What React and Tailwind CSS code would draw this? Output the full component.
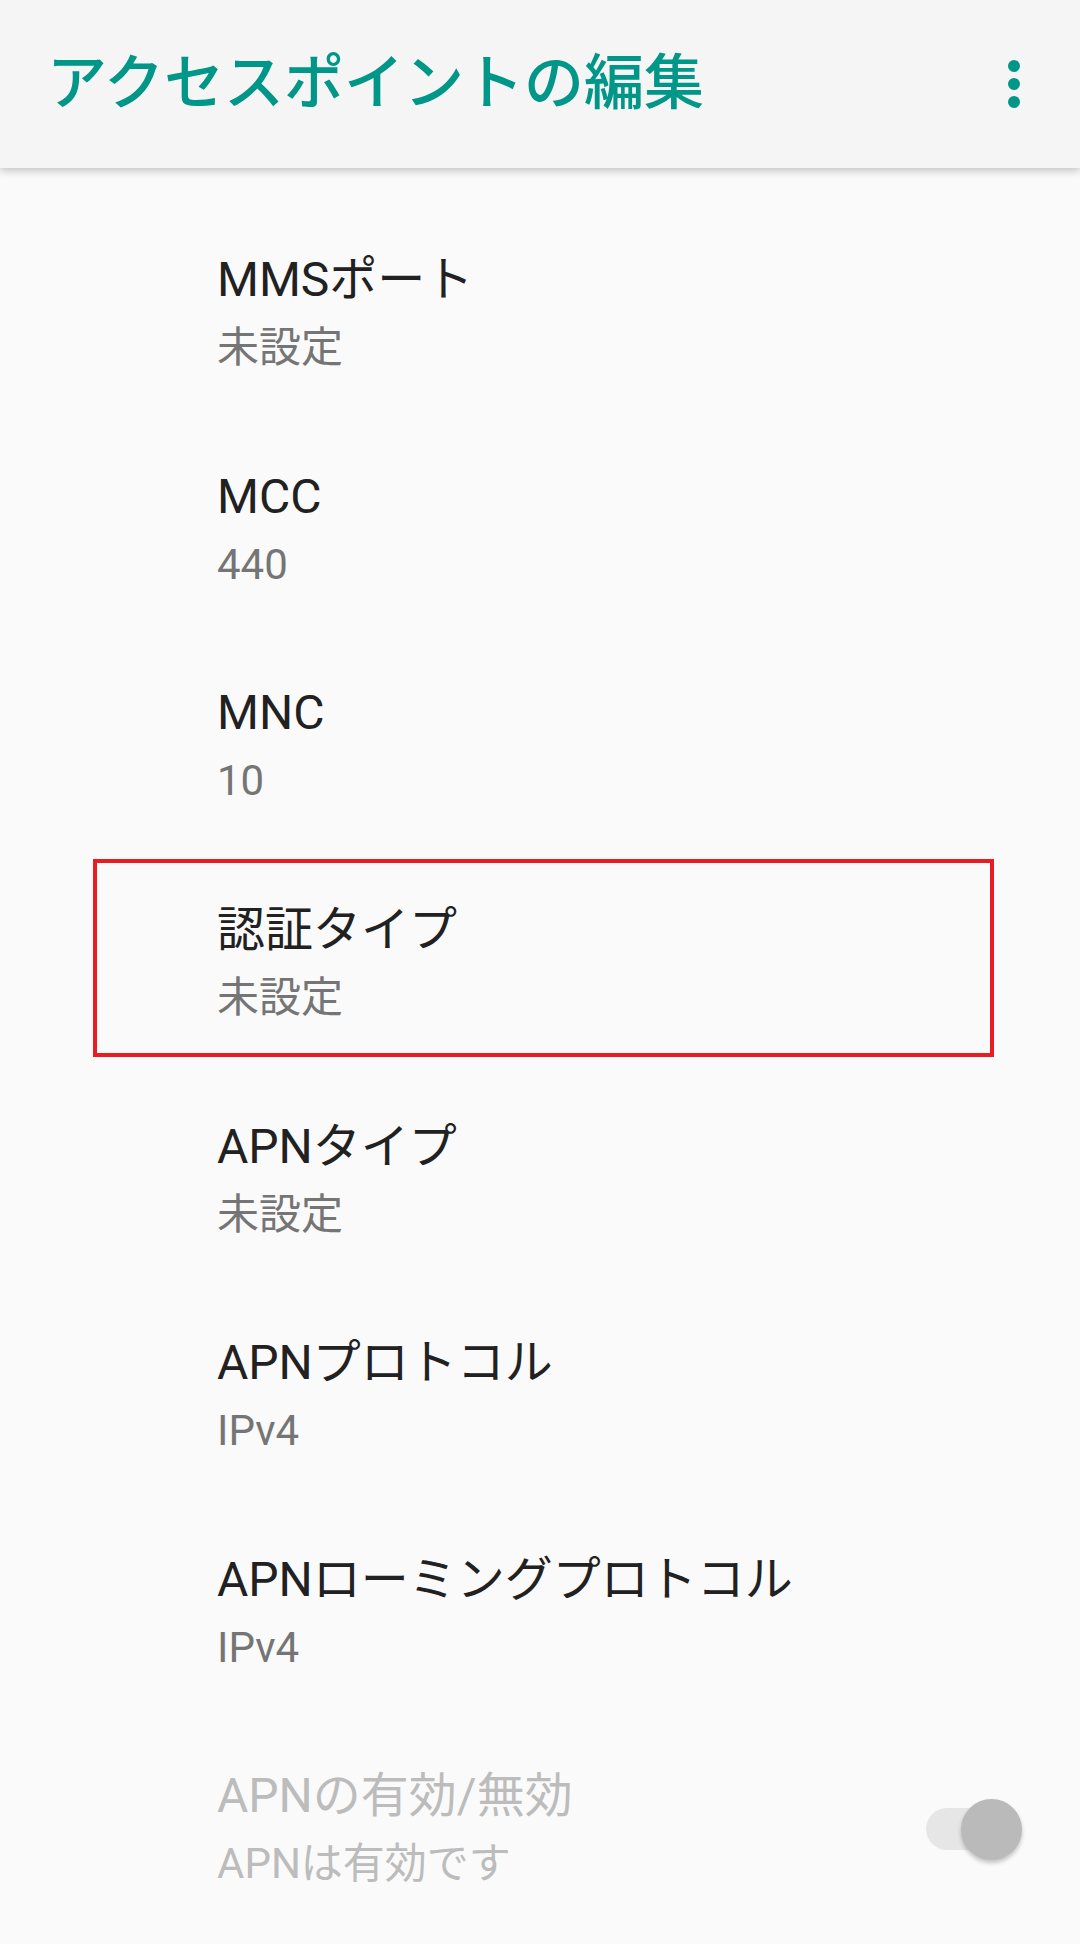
import React from "react";

const font = { fontFamily: 'Roboto, "Noto Sans CJK JP", sans-serif' };

const prefs = [
  { title: "MMSポート", summary: "未設定" },
  { title: "MCC", summary: "440" },
  { title: "MNC", summary: "10" },
  { title: "認証タイプ", summary: "未設定", marked: true },
  { title: "APNタイプ", summary: "未設定" },
  { title: "APNプロトコル", summary: "IPv4" },
  { title: "APNローミングプロトコル", summary: "IPv4" },
];

const PrefItem = ({ title, summary, marked }) => (
  <div className="relative h-[216.6px] flex flex-col justify-center pl-[217px]">
    <div className="text-[48px] leading-[60px] text-[#212121]">{title}</div>
    <div className="mt-[10px] text-[42px] leading-[56px] text-[#757575]">{summary}</div>
    {marked && (
      <div className="absolute left-[93px] top-[4px] w-[901px] h-[198px] border-[4px] border-[#e91c24]" />
    )}
  </div>
);

const DisabledSwitch = () => (
  <div className="relative w-[96px] h-[61px] shrink-0">
    <div className="absolute left-0 top-[9.5px] w-[84px] h-[42px] rounded-full bg-[#e6e6e6]" />
    <div className="absolute right-0 top-0 w-[61px] h-[61px] rounded-full bg-[#bababa] shadow-[0_3px_4px_rgba(0,0,0,0.22)]" />
  </div>
);

export default function App() {
  return (
    <div className="min-h-screen bg-[#fafafa]" style={font}>
      {/* Toolbar */}
      <div className="relative z-10 h-[168px] bg-[#f5f5f5] flex items-center pl-[47px] pr-[60px] shadow-[0_3px_8px_rgba(0,0,0,0.22)]">
        <h1 className="flex-1 text-[60px] leading-[80px] font-medium text-[#009688]">
          アクセスポイントの編集
        </h1>
        <div className="flex flex-col gap-[6px]">
          <span className="w-[12px] h-[12px] rounded-full bg-[#009688]" />
          <span className="w-[12px] h-[12px] rounded-full bg-[#009688]" />
          <span className="w-[12px] h-[12px] rounded-full bg-[#009688]" />
        </div>
      </div>

      {/* Preference list */}
      <div className="pt-[37px]">
        {prefs.map((p) => (
          <PrefItem key={p.title} {...p} />
        ))}
        <div className="h-[216.6px] flex items-center pl-[217px] pr-[58px]">
          <div className="flex-1">
            <div className="text-[48px] leading-[60px] text-[#bcbcbc]">APNの有効/無効</div>
            <div className="mt-[10px] text-[42px] leading-[56px] text-[#bcbcbc]">APNは有効です</div>
          </div>
          <DisabledSwitch />
        </div>
      </div>
    </div>
  );
}
